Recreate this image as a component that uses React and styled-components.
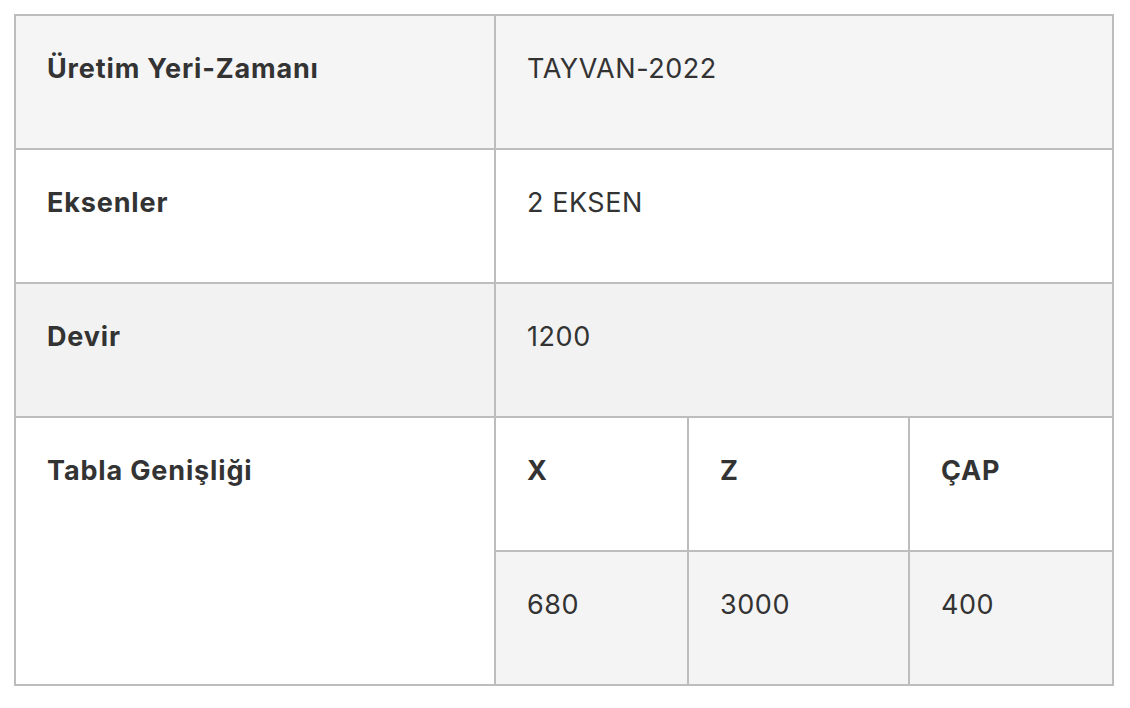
import React from "react";
import styled, { createGlobalStyle } from "styled-components";

const GlobalStyle = createGlobalStyle`
  html, body {
    margin: 0;
    padding: 0;
    background: #ffffff;
  }
  body {
    font-family: Inter, "Noto Sans", "Liberation Sans", sans-serif;
    color: #333333;
  }
`;

const Page = styled.div`
  padding: 14px;
`;

const Table = styled.div`
  width: 1100px;
  display: grid;
  grid-template-columns: 480px 618px;
  grid-auto-rows: 134px;
  border-top: 2px solid #bdbdbd;
  border-left: 2px solid #bdbdbd;
  box-sizing: border-box;
`;

const Cell = styled.div`
  box-sizing: border-box;
  padding: 38px 30px 0 31px;
  border-right: 2px solid #bdbdbd;
  border-bottom: 2px solid #bdbdbd;
  background: ${(p) => p.$bg || "#ffffff"};
  font-size: 27px;
  line-height: 30px;
  font-weight: ${(p) => (p.$bold ? 700 : 400)};
  letter-spacing: ${(p) => (p.$bold ? "0.85px" : "0.55px")};
  grid-row: ${(p) => (p.$span ? `span ${p.$span}` : "auto")};
`;

const Nested = styled.div`
  grid-row: span 2;
  display: grid;
  grid-template-columns: 193px 221px 204px;
  grid-auto-rows: 134px;
`;

const rows = [
  { label: "Üretim Yeri-Zamanı", value: "TAYVAN-2022", bg: "#f5f5f5" },
  { label: "Eksenler", value: "2 EKSEN", bg: "#ffffff" },
  { label: "Devir", value: "1200", bg: "#f2f2f2" },
];

const heads = ["X", "Z", "ÇAP"];
const values = ["680", "3000", "400"];

export default function App() {
  return (
    <Page>
      <GlobalStyle />
      <Table>
        {rows.map((r) => (
          <React.Fragment key={r.label}>
            <Cell $bold $bg={r.bg}>{r.label}</Cell>
            <Cell $bg={r.bg}>{r.value}</Cell>
          </React.Fragment>
        ))}
        <Cell $bold $span={2}>Tabla Genişliği</Cell>
        <Nested>
          {heads.map((h) => (
            <Cell key={h} $bold>{h}</Cell>
          ))}
          {values.map((v, i) => (
            <Cell key={i} $bg="#f4f4f4">{v}</Cell>
          ))}
        </Nested>
      </Table>
    </Page>
  );
}
